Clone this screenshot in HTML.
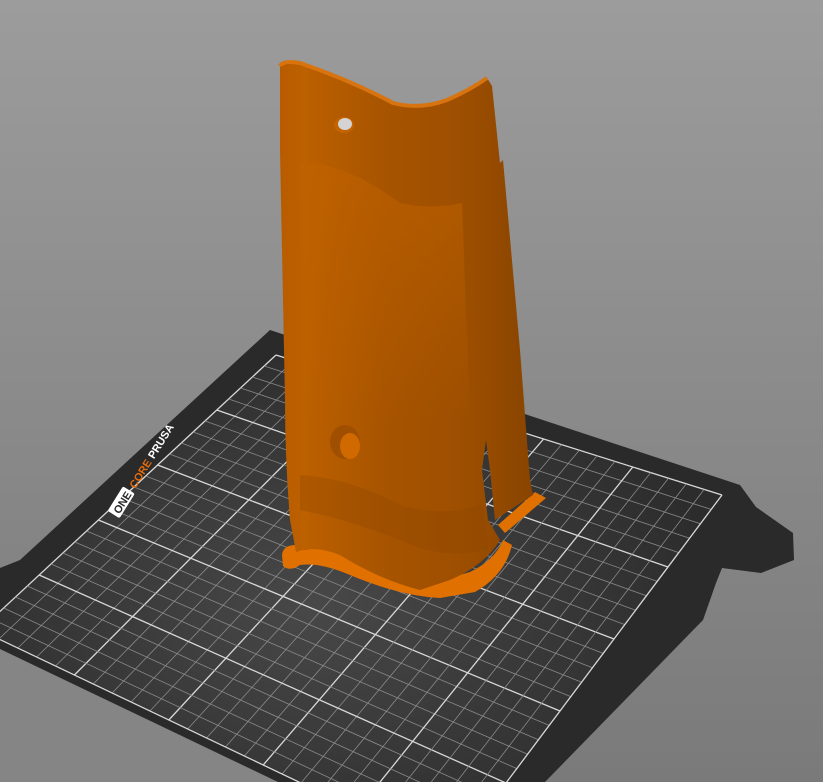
<!DOCTYPE html>
<html><head><meta charset="utf-8"><style>
html,body{margin:0;padding:0;width:823px;height:782px;overflow:hidden;background:#888}
svg{display:block}
</style></head><body>
<svg id="s" width="823" height="782" viewBox="0 0 823 782" xmlns="http://www.w3.org/2000/svg" style="overflow:hidden">
<defs>
<linearGradient id="bg" x1="0" y1="0" x2="0" y2="1">
<stop offset="0" stop-color="#9c9c9c"/><stop offset="1" stop-color="#7a7a7a"/></linearGradient>
<linearGradient id="or" x1="0" y1="0" x2="1" y2="0">
<stop offset="0" stop-color="#b85c00"/><stop offset="0.1" stop-color="#bc6000"/>
<stop offset="0.4" stop-color="#a85400"/><stop offset="0.75" stop-color="#9c4e00"/>
<stop offset="1" stop-color="#884400"/></linearGradient>
<linearGradient id="pan" x1="0" y1="0" x2="0" y2="1">
<stop offset="0" stop-color="#c06200" stop-opacity="0.6"/><stop offset="1" stop-color="#c06200" stop-opacity="0"/></linearGradient>
<radialGradient id="glow" cx="0.45" cy="0.5" r="0.55">
<stop offset="0" stop-color="#484848"/><stop offset="1" stop-color="#2c2c2c"/></radialGradient>
</defs>
<rect width="823" height="782" fill="url(#bg)"/>
<polygon points="270,330 740,485 756,507 793,533 794,560 761,573 722,568 716,583 703,620 545,782 0,782 0,568 20,560" fill="#2a2a2a"/>
<polygon points="276,355 722,495 452,855 -20,630" fill="url(#glow)"/>
<g id="grid"></g>
<polygon points="0,649 278,782 0,782" fill="#858585"/>
<g transform="translate(118,515) rotate(-58)">
<rect x="-2" y="-11" width="29" height="14" rx="2" fill="#fff"/>
<text x="1" y="1" font-family="Liberation Sans,sans-serif" font-weight="bold" font-size="11" fill="#2a2a2a">ONE</text>
<text x="31" y="1" font-family="Liberation Sans,sans-serif" font-weight="bold" font-size="11" fill="#e06a10">CORE</text>
<text x="66" y="1" font-family="Liberation Sans,sans-serif" font-weight="bold" font-size="11" fill="#fff">PRUSA</text>
</g>
<path d="M282,555 Q283,545 296,545 L305,550 Q320,545 340,555 L400,575 Q440,582 470,572 Q495,560 503,540 L512,545 Q505,575 475,592 L440,598 Q400,596 350,575 Q320,562 300,565 Q290,572 283,566 Z" fill="#e07000"/>
<path d="M498,525 L535,492 L546,498 L505,533 Z" fill="#e07000"/>
<path d="M280,66 Q283,60 300,63 Q350,80 393,103 Q420,110 447,100 Q470,90 487,78 L492,86 L500,163 L503,160 L520,350 L530,480 L533,495 L510,510 L495,520 L490,470 L486,440 L482,470 L488,520 L500,540 Q485,565 450,580 L420,590 Q380,580 340,555 Q315,545 296,552 L290,520 Q285,460 285,400 Q282,250 280,150 Z" fill="url(#or)"/>
<path d="M300,163 Q340,160 400,203 Q430,210 462,203 L470,420 L300,420 Z" fill="url(#pan)"/>
<path d="M280,66 Q283,60 300,63 Q350,80 393,103 Q420,110 447,100 Q470,90 487,78" fill="none" stroke="#d87410" stroke-width="4"/>
<path d="M300,475 Q350,478 400,505 Q440,518 482,505 L488,550 Q440,560 400,540 Q350,520 300,510 Z" fill="#8a4400" opacity="0.3"/>
<ellipse cx="344" cy="125" rx="10" ry="8" fill="#c46400"/>
<ellipse cx="345" cy="124" rx="7" ry="6" fill="#d4d4d4"/>
<ellipse cx="345" cy="442" rx="15" ry="17" fill="#a04e00"/>
<ellipse cx="350" cy="446" rx="10" ry="13" fill="#d06a00"/>
</svg>
<script>
(function(){
var A=[276,355],B=[722,495],C=[452,855],D=[-20,630];
function L(p,q,t){return [p[0]+(q[0]-p[0])*t,p[1]+(q[1]-p[1])*t];}
var g=document.getElementById('grid'),h='';
for(var i=0;i<=25;i++){var t=i/25,maj=(i%5==0);
var st=maj?'stroke="#d8d8d8" stroke-width="1.3"':'stroke="#8a8a8a" stroke-width="0.8"';
var p=L(A,B,t),q=L(D,C,t);
h+='<line x1="'+p[0]+'" y1="'+p[1]+'" x2="'+q[0]+'" y2="'+q[1]+'" '+st+'/>';
p=L(A,D,t);q=L(B,C,t);
h+='<line x1="'+p[0]+'" y1="'+p[1]+'" x2="'+q[0]+'" y2="'+q[1]+'" '+st+'/>';}
g.innerHTML=h;
})();
</script>
</body></html>
